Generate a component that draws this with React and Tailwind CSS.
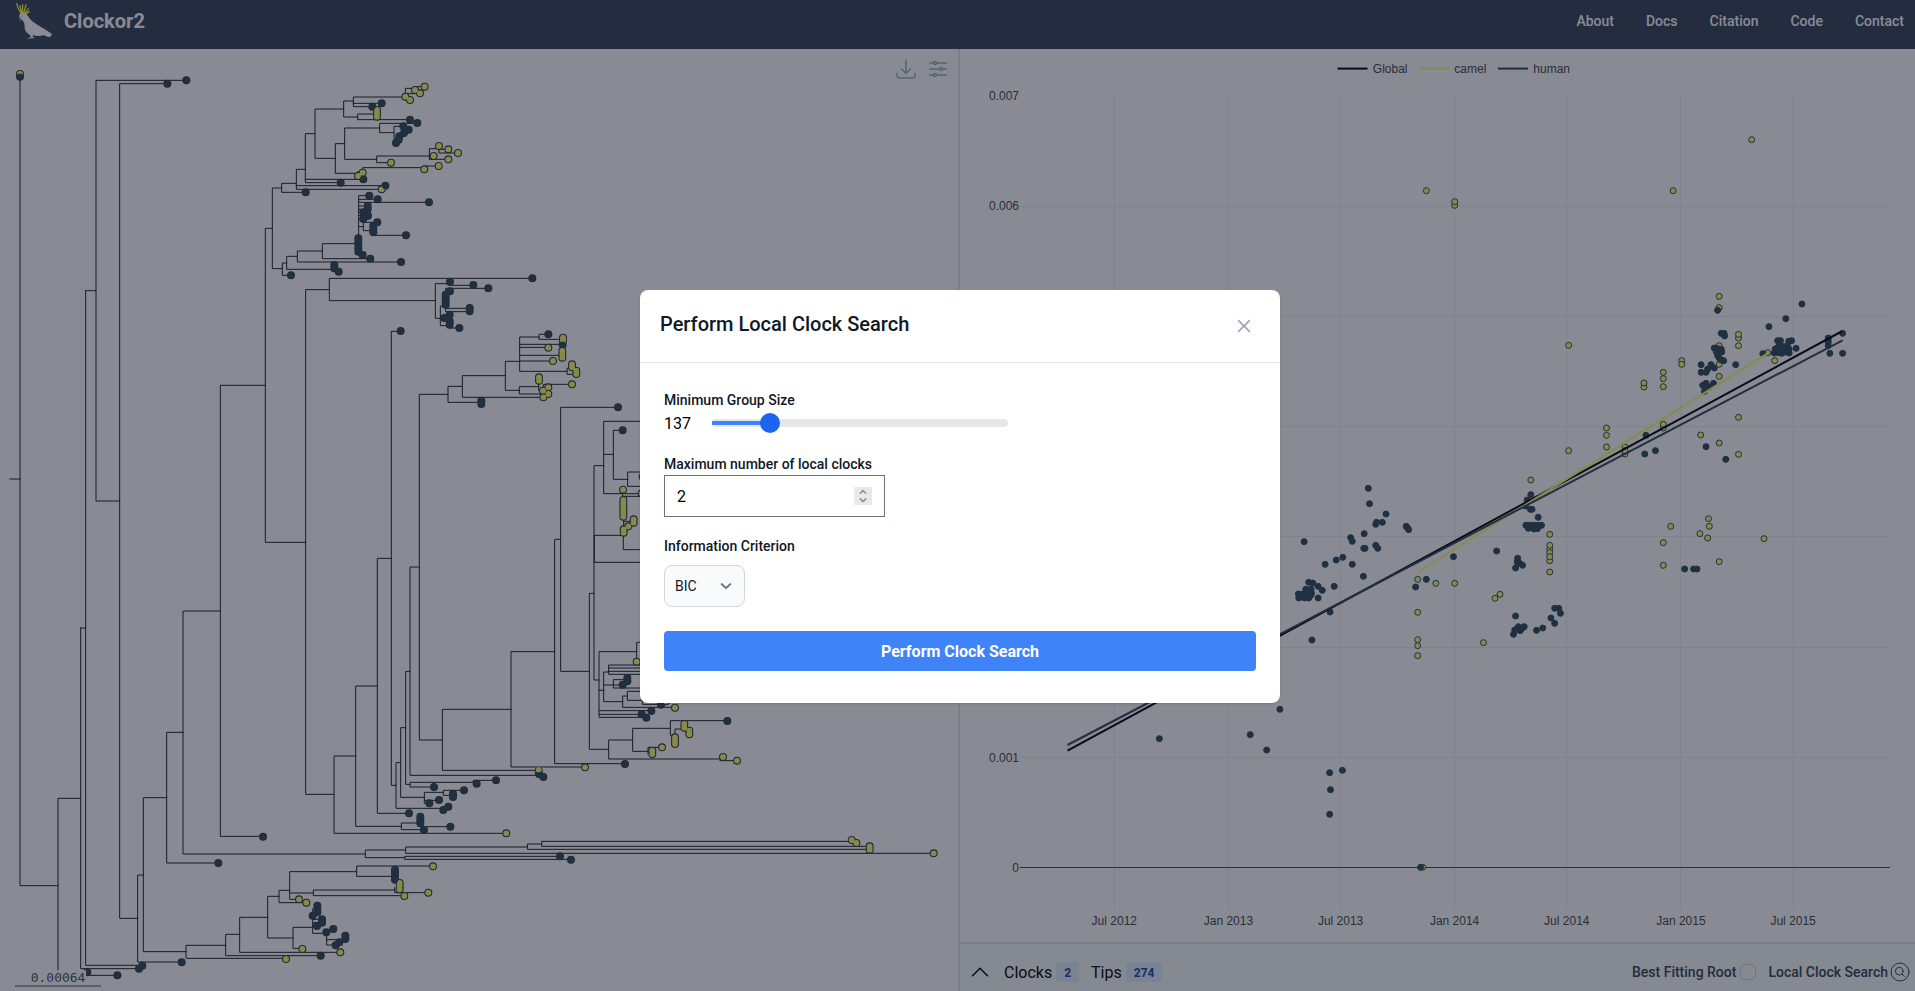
import React from "react";

/* Tree geometry is expressed in thirds of a pixel. */
const TREE_EDGES = [
  "M30 1437H60M60 235V2657H174M174 2910V2395H242M242 1884H257M242 1884V2906H417M257 872V2896H427M257 872H288",
  "M559 241H288V1503H359M502 251H359V2755H413M430 2625H413V2886H545M500 2393H430V2855H558M549 2197H500V2589H655",
  "M661 1833H549V2562H1096M796 1156H661V2509H789M817 685H796V1627H917M845 564H817V806H847M889 550H845V577H917",
  "M916 508H889V568H1145M889 557H1156M945 401H916V548H1022M916 538H1090M1031 327H945V475H1006M1060 303H1031V351H1073",
  "M1216 291H1060V320H1117M1060 310H1145M1245 265H1216V291M1216 281H1260M1245 270V260H1274M1125 342H1073V359H1230",
  "M1034 431H1006V520H1073V515H1088V503H1273M1273 503V498H1316M1139 384H1034V478H1130M1252 370H1139V398H1182",
  "M1210 379H1182V420M1288 468H1130V488H1173M1317 446H1288V478H1345M1317 448H1345M1317 448V459H1374",
  "M860 789H847V826H873M892 769H860V808H1003M967 753H892V786H1203M1075 731H967V776H1111M1108 587H1076V715",
  "M1076 598H1133M1076 607H1287M1076 618H1103M1076 628H1103M1076 637H1090M1076 647H1104M1076 657H1090M1132 667H1090V692H1120M1076 680H1090M1120 706H1218",
  "M988 869H917V2383H1002M1597 835H988V902H1306M1350 851H1306V955H1321M1345 856H1420M1337 918H1321V977H1345",
  "M1464 865H1337V935H1409M1337 925H1409M1349 984H1378M1202 994H1174V2356H1188M1174 1675H1132V2440H1227",
  "M1132 2058H1067V2479H1204M1067 2268H1002V2500H1519M1255 2469H1204V2489H1272M1265 2480H1351",
  "M1202 2288H1188V2425H1330M1217 2183H1202V2392H1273M1330 2377H1273V2401H1317M1288 2410H1273V2400M1392 2371H1330V2386H1360",
  "M1230 2014H1217V2353H1230M1420 2347H1230V2361H1302M1420 2347V2341H1488M1258 1701H1230V2326H1620",
  "M1344 1183H1258V2220H1327M1533 2128H1327V2311H1617M1664 1955H1533V2301H1755M1682 1618H1664V2291H1875",
  "M1854 1222H1682V2014H1768M1782 1780H1768V2248H1826M1811 1397H1782V2040H1797M1783 1606H1870M1783 1606V1687H1930",
  "M1930 1264H1811V1481H1921M1811 1363H1840M1868 1291H1840V1438H1883M1930 1416H1883V1459H1930",
  "M1868 1469V1489H1930M1871 1550V1580M1871 1564H1900M1870 1606V1649H1930",
  "M1387 1159H1344V1207H1444M1516 1127H1387V1192H1630M1559 1084H1516V1171H1558M1617 1011H1559V1114H1701",
  "M1559 1033H1688M1559 1042H1645M1559 1066H1680M1559 1083H1659M1645 1003H1617V1018H1688M1716 1105H1701V1123H1729",
  "M1616 1160H1558V1182H1640M1616 1145V1172H1629M1630 1162V1153H1716",
  "M1910 1955H1797V2152H1939M1797 2071H1811M1930 1927H1910V1985M1826 2016H1811V2105H1868M1930 1995H1826V2023H1930",
  "M1826 2004H1930M1826 2014H1930M1811 2055H1868M1870 2039H1840V2064H1930M1882 2088H1868V2122H2025M1930 2074H1882V2101H1927V2113H1985",
  "M1797 2132H1954M1797 2143H1925M1898 2220H1826V2277H2169M2160 2282H2211M2011 2185H1898V2254H1944",
  "M2182 2162H2011V2206H2025M2025 2212V2187H2053M1944 2262V2242H1986",
  "M1217 2550H1096V2573H1214M1582 2541H1217V2560H2801M1625 2532H1582V2548H2609M2555 2524H1625V2539H2609",
  "M1680 2569H1214V2578H1713M677 2836H558V2875H858M719 2803H677V2867H962M803 2752H719V2857H1021",
  "M837 2689H803V2814H879M869 2671H837V2708H919M1070 2615H869V2698H897M869 2679H940M1299 2598H1070V2629H1180",
  "M1184 2670H940V2687H1213M1184 2663V2678H1285M936 2782H879V2845H907M938 2727V2800H980M938 2758H966M938 2768H966",
  "M980 2800V2835H1007M980 2819H1020M258 2926H352",
].join("");

const HUMAN_TIPS = [
  [60,230],[502,251],[559,241],[1145,310],[1117,320],[1230,359],[1252,369],[1210,379],[1226,389],[1212,399],[1198,409],[1196,419],[1188,429],
  [1090,538],[1022,548],[1156,557],[917,577],[1108,587],[1133,598],[1287,607],[1103,618],[1103,628],[1090,637],[1104,647],[1090,657],[1132,667],
  [1120,677],[1120,687],[1120,697],[1218,706],[1075,715],[1075,725],[1075,735],[1075,745],[1075,755],[1088,765],[1111,776],[1203,786],
  [1003,795],[1003,805],[1016,815],[873,826],[1597,835],[1350,845],[1420,855],[1465,865],[1350,874],[1337,884],[1337,894],[1337,904],[1337,914],
  [1409,924],[1409,934],[1349,944],[1333,954],[1349,964],[1349,974],[1378,984],[1202,993],[1645,1003],[1688,1034],[1444,1202],[1444,1212],
  [1854,1222],[1868,1291],[1928,1430],[1882,2034],[1882,2044],[1868,2054],[1983,2114],[1954,2133],[1925,2143],[1939,2153],[2182,2163],
  [1875,2292],[1617,2322],[1630,2331],[1488,2341],[1430,2351],[1302,2361],[1392,2371],[1359,2381],[1359,2391],[1317,2400],[1288,2410],
  [1345,2420],[1330,2430],[1227,2440],[1261,2450],[1261,2460],[1261,2470],[1351,2480],[1272,2490],[789,2510],[1680,2569],[1713,2579],[655,2589],
  [1185,2609],[1185,2619],[1185,2629],[1185,2639],[952,2717],[952,2727],[952,2737],[938,2747],[966,2758],[966,2768],[951,2778],[1000,2787],
  [979,2797],[1036,2807],[1036,2817],[1018,2827],[1007,2836],[962,2867],[545,2887],[427,2897],[417,2906],[262,2917],[352,2926],
];

const CAMEL_TIPS = [
  [60,222],[1274,260],[1245,270],[1260,280],[1216,290],[1230,300],[1131,330],[1131,340],[1131,350],[1317,438],[1345,448],[1374,459],[1301,468],
  [1345,478],[1173,488],[1316,498],[1273,508],[1088,518],[1074,528],[1145,568],[1689,1013],[1689,1022],[1645,1043],[1687,1053],[1687,1063],
  [1687,1073],[1659,1083],[1716,1093],[1716,1102],[1729,1112],[1729,1122],[1617,1132],[1617,1142],[1716,1153],[1645,1162],[1629,1172],
  [1645,1182],[1630,1192],[1869,1469],[1925,1480],[1870,1500],[1870,1510],[1870,1520],[1870,1530],[1870,1540],[1870,1550],[1901,1558],
  [1901,1568],[1885,1579],[1871,1588],[1871,1598],[1910,1985],[1998,2104],[2025,2123],[2053,2172],[2053,2183],[2068,2192],[2068,2203],
  [2025,2212],[2025,2222],[2025,2232],[1986,2242],[1957,2252],[1957,2262],[2169,2271],[2211,2282],[1755,2302],[1616,2312],[1519,2500],
  [2555,2520],[2569,2529],[2609,2539],[2609,2549],[2801,2560],[1299,2599],[1199,2649],[1199,2658],[1199,2668],[1285,2678],[1213,2688],
  [897,2698],[919,2708],[907,2847],[1021,2857],[858,2877],
];

/* Sample positions in the regression plot's own units. */
const toX = (u) => 1270 + u / 2.431;
const toY = (v) => 270 + v / 3;

const CAMEL_SAMPLES = [
  [371,1792],[380,-238],[449,-194],[449,-205],[980,-238],[1171,-391],[1092,79],[1092,113],[1092,227],[1092,283],[1092,319],[1139,204],[1139,193],
  [1139,227],[1227,272],[1210,248],[1001,272],[1001,283],[956,307],[956,326],[956,350],[909,351],[909,339],[726,226],[818,474],[818,496],
  [818,531],[863,531],[863,552],[863,542],[956,474],[956,463],[1139,442],[1047,495],[1092,519],[1139,553],[726,542],[634,630],[680,793],
  [680,838],[680,848],[680,872],[680,860],[680,826],[680,906],[359,928],[403,940],[449,940],[359,1027],[359,1109],[359,1127],[359,1157],
  [519,1118],[547,985],[559,973],[974,769],[956,818],[956,886],[1066,746],[1068,769],[1045,791],[1064,804],[1201,806],[1092,875],
];

const HUMAN_SAMPLES = [
  [1293,102],[1254,146],[1213,170],[1088,121],[1097,190],[1104,190],[1105,198],[1080,234],[1088,236],[1097,238],[1085,245],[1092,247],[1098,246],
  [1088,256],[1092,264],[1097,270],[1103,272],[1198,251],[1234,212],[1241,212],[1268,212],[1261,214],[1228,237],[1235,232],[1242,228],[1250,230],
  [1258,228],[1262,238],[1232,247],[1238,248],[1244,250],[1252,246],[1262,249],[1226,249],[1279,235],[1256,238],[1248,238],[1357,204],[1357,211],
  [1357,218],[1357,227],[1361,250],[1392,250],[1392,190],[1048,284],[1048,307],[1060,307],[1064,297],[1072,284],[1080,294],[1132,284],[1060,340],
  [1052,346],[1078,340],[1068,352],[1060,355],[1056,364],[1060,530],[1108,568],[914,496],[911,552],[937,542],[634,674],[625,690],[621,708],
  [633,718],[637,718],[652,742],[622,766],[630,766],[638,766],[646,766],[654,766],[660,766],[628,775],[642,777],[650,776],[551,843],[602,865],
  [601,876],[607,880],[614,886],[597,894],[597,1038],[604,1070],[618,1070],[595,1080],[608,1082],[592,1093],[600,1077],[612,1076],[648,1081],
  [663,1074],[683,1044],[692,1060],[692,1015],[702,1015],[706,1030],[1008,897],[1030,897],[1038,897],[239,655],[242,701],[282,732],[259,757],
  [273,757],[257,763],[331,769],[334,773],[337,779],[229,791],[196,803],[200,814],[83,815],[257,826],[262,835],[228,835],[231,835],[177,862],
  [161,870],[134,883],[200,883],[227,919],[156,949],[94,937],[104,939],[117,949],[100,957],[127,961],[87,958],[69,972],[78,973],[86,970],
  [94,972],[101,970],[70,984],[84,984],[94,984],[99,976],[117,984],[102,1110],[146,1026],[446,860],[380,928],[354,951],[-269,1406],[-48,1394],
  [-8,1440],[24,1318],[145,1508],[176,1501],[147,1559],[145,1633],[366,1792],
];

const MONTHS = [
  ["Jul 2012", 1114.3], ["Jan 2013", 1228.4], ["Jul 2013", 1340.6], ["Jan 2014", 1454.6],
  ["Jul 2014", 1566.8], ["Jan 2015", 1680.9], ["Jul 2015", 1793.1],
];
const RATE_LINES = [206.4, 316.5, 426.5, 536.6, 647.2, 757.3];
const RATE_LABELS = [["0.007", 96.2], ["0.006", 206.4], ["0.001", 757.9], ["0", 868]];

function Tips({ points, fill, r }) {
  return points.map(([x, y], i) => <circle key={i} cx={x} cy={y} r={r} fill={fill} />);
}

function Tree() {
  return (
    <svg width="958" height="942" viewBox="0 147 2874 2826" className="block">
      <path d={TREE_EDGES} fill="none" stroke="#1f2026" strokeWidth="3" strokeLinecap="square" />
      <Tips points={HUMAN_TIPS} r="12" fill="#35383f" />
      <Tips points={CAMEL_TIPS} r="12" fill="#35383f" />
      <Tips points={CAMEL_TIPS} r="8.8" fill="#fdff6b" />
      <Tips points={HUMAN_TIPS} r="9.8" fill="#2b485a" />
      <circle cx="1616" cy="2309" r="8" fill="#fdff6b" />
      <rect x="85" y="2911" width="173" height="40" fill="#ffffff" />
      <text x="92" y="2947" fontSize="39" fill="#4d4f55" fontFamily="'DejaVu Sans Mono', monospace">0.00064</text>
      <path d="M45 2958H303" stroke="#85868a" strokeWidth="5" />
    </svg>
  );
}

function Legend({ x, color, label }) {
  return (
    <g>
      <path d={`M${x} 68.6h30`} stroke={color} strokeWidth="2" />
      <text x={x + 35.3} y="73">{label}</text>
    </g>
  );
}

function Plot() {
  return (
    <svg width="955" height="893" viewBox="960 49 955 893" className="block" fontFamily="'Liberation Sans', Arial, sans-serif" fontSize="12" fill="#444">
      <g stroke="#eee" strokeWidth="1" shapeRendering="crispEdges">
        {MONTHS.map(([m, x]) => <path key={m} d={`M${x} 95V911`} />)}
        {RATE_LINES.map((y) => <path key={y} d={`M1021 ${y}H1889`} />)}
      </g>
      <path d="M1020 867.5H1890" stroke="#444" />
      {MONTHS.map(([m, x]) => <text key={m} x={x} y="925" textAnchor="middle">{m}</text>)}
      {RATE_LABELS.map(([r, y]) => <text key={r} x="1019" y={y + 3.6} textAnchor="end">{r}</text>)}
      <Legend x={1337.5} color="#000" label="Global" />
      <Legend x={1419} color="#fdff6b" label="camel" />
      <Legend x={1498} color="#2b485a" label="human" />
      <g stroke="#2b485a" strokeWidth="1">
        {CAMEL_SAMPLES.map(([u, v], i) => <circle key={i} cx={toX(u)} cy={toY(v)} r="3" fill="#fdff6b" />)}
        {HUMAN_SAMPLES.map(([u, v], i) => <circle key={i} cx={toX(u)} cy={toY(v)} r="3" fill="#2b485a" />)}
      </g>
      <g fill="none" strokeWidth="2">
        <path d="M1067.5 750.7L1841.5 331.5" stroke="#000" />
        <path d="M1418 572L1767.7 353.3" stroke="#fdff6b" />
        <path d="M1067.5 745L1842.6 340.3" stroke="#2b485a" />
      </g>
    </svg>
  );
}

function Cockatoo() {
  return (
    <svg width="38" height="38" viewBox="45 6 114 114" className="block">
      <path d="M65 44Q54 28 50 11M65 42L60 17M67 42L68 15M70 42L78 15M72 43L85 26M74 44L88 34" stroke="#fdff3b" strokeWidth="4" fill="none" strokeLinecap="round" />
      <path d="M58 46Q59 38 68 38Q80 39 86 51Q93 63 112 74L137 89L156 102L153 109L146 112L132 106Q112 110 98 105L99 111L105 114L78 116L92 112L90 105Q72 96 74 78Q74 68 67 60L62 62Q56 54 58 46Z" fill="#fff" />
      <path d="M57 50Q56 57 62 63L66 57Z" fill="#8b8f96" />
      <circle cx="66" cy="48" r="1.8" fill="#555" />
    </svg>
  );
}

function Navbar() {
  return (
    <header className="flex h-[49px] shrink-0 items-start justify-between bg-[#364057] pl-[15px] pr-[11px] text-white">
      <div className="flex items-start gap-[11px] pt-[2px]">
        <Cockatoo />
        <span className="pt-[5px] text-xl font-bold leading-7">Clockor2</span>
      </div>
      <nav className="flex gap-8 pt-[11px] text-sm font-medium leading-5">
        <a>About</a><a>Docs</a><a>Citation</a><a>Code</a><a>Contact</a>
      </nav>
    </header>
  );
}

function TreeTools() {
  return (
    <div className="absolute left-[894px] top-[8px] flex gap-2 text-[#a3abbb]">
      <svg width="24" height="24" viewBox="0 0 24 24" fill="none" stroke="currentColor" strokeWidth="1.5" strokeLinecap="round" strokeLinejoin="round">
        <path d="M3 16.5v2.25A2.25 2.25 0 005.25 21h13.5A2.25 2.25 0 0021 18.75V16.5M16.5 12L12 16.5m0 0L7.5 12m4.5 4.5V3" />
      </svg>
      <svg width="24" height="24" viewBox="0 0 24 24" fill="none" stroke="currentColor" strokeWidth="1.5" strokeLinecap="round" strokeLinejoin="round">
        <path d="M10.5 6h9.75M10.5 6a1.5 1.5 0 11-3 0m3 0a1.5 1.5 0 10-3 0M3.75 6H7.5m3 12h9.75m-9.75 0a1.5 1.5 0 01-3 0m3 0a1.5 1.5 0 00-3 0m-3.75 0H7.5m9-6h3.75m-3.75 0a1.5 1.5 0 01-3 0m3 0a1.5 1.5 0 00-3 0m-9.75 0h9.75" />
      </svg>
    </div>
  );
}

function Badge({ children }) {
  return (
    <span className="flex h-5 items-center rounded bg-[#e1effe] px-2 pt-px text-xs font-bold text-[#1e429f]">{children}</span>
  );
}

function InfoBar() {
  return (
    <footer className="flex h-[49px] items-start justify-between border-t-2 border-gray-200 bg-gray-50 pl-2 pr-[5px] pt-[18px]">
      <div className="flex h-5 items-center text-base text-black">
        <svg width="24" height="24" viewBox="0 0 24 24" fill="none" stroke="currentColor" strokeWidth="1.5" strokeLinecap="round" strokeLinejoin="round">
          <path d="M4.5 15.75l7.5-7.5 7.5 7.5" />
        </svg>
        <span className="ml-3 mr-1 pt-[2px]">Clocks</span>
        <Badge>2</Badge>
        <span className="ml-3 mr-1 pt-[2px]">Tips</span>
        <Badge>274</Badge>
      </div>
      <div className="flex h-5 items-center text-sm font-medium text-gray-700">
        <span>Best Fitting Root</span>
        <span className="ml-1 size-4 rounded border border-gray-300 bg-gray-50" />
        <span className="ml-3">Local Clock Search</span>
        <svg width="20" height="20" viewBox="0 0 20 20" fill="none" stroke="currentColor" strokeWidth="1" strokeLinecap="round" className="ml-[2px]">
          <circle cx="10" cy="10" r="9" />
          <circle cx="9.2" cy="9.2" r="3.8" />
          <path d="M12 12l2.4 2.4" />
        </svg>
      </div>
    </footer>
  );
}

function ClockSearchDialog() {
  return (
    <div className="flex h-[413px] w-[640px] flex-col rounded-lg bg-white shadow">
      <div className="flex h-[73px] items-start justify-between border-b border-gray-200 px-5 pt-[19px]">
        <h3 className="text-xl font-medium leading-[30px] text-gray-900">Perform Local Clock Search</h3>
        <svg width="20" height="20" viewBox="0 0 20 20" fill="none" stroke="#9ca3af" strokeWidth="1.5" strokeLinecap="round" className="mr-[6px] mt-[7px]">
          <path d="M4.6 4.6l10.8 10.8M15.4 4.6L4.6 15.4" />
        </svg>
      </div>
      <div className="flex flex-col px-6 pt-[27px] text-gray-900">
        <label className="text-sm font-medium leading-5">Minimum Group Size</label>
        <div className="flex h-[26px] items-center">
          <span className="w-12 pt-[2px] text-base text-black">137</span>
          <div className="relative flex h-2 w-[296px] items-center rounded-lg bg-gray-200">
            <span className="h-1 w-[58px] bg-[#3f83f8]" />
            <span className="absolute left-[48px] top-[-6px] size-5 rounded-full bg-[#1c64f2]" />
          </div>
        </div>
        <label className="mt-[18px] text-sm font-medium leading-5">Maximum number of local clocks</label>
        <div className="mt-px flex h-[42px] w-[221px] items-center justify-between border border-gray-500 px-3 text-base text-black">
          <span className="pt-[2px]">2</span>
          <span className="flex h-[18px] w-[18px] items-center justify-center bg-[#e9e9ed]">
            <svg width="18" height="18" viewBox="0 0 18 18" fill="none" stroke="#8f8f9d" strokeWidth="1.6">
              <path d="M5.8 6.8L9 3.6l3.2 3.2M5.8 11.4L9 14.6l3.2-3.2" />
            </svg>
          </span>
        </div>
        <label className="mt-[19px] text-sm font-medium leading-5">Information Criterion</label>
        <div className="mt-[9px] flex h-[42px] w-[81px] items-center justify-between rounded-lg border border-gray-300 bg-gray-50 pl-[10px] pr-3 text-sm">
          <span>BIC</span>
          <svg width="12" height="8" viewBox="0 0 12 8" fill="none" stroke="#6b7280" strokeWidth="1.8" strokeLinecap="round" strokeLinejoin="round">
            <path d="M1.6 2L6 6.2 10.4 2" />
          </svg>
        </div>
        <button className="mt-6 h-10 rounded bg-[#3f83f8] pt-[2px] text-base font-bold text-white">Perform Clock Search</button>
      </div>
    </div>
  );
}

export default function App() {
  return (
    <div className="flex h-[991px] w-[1915px] flex-col overflow-hidden bg-white font-['Roboto',sans-serif]">
      <Navbar />
      <main className="flex h-[942px]">
        <section className="relative w-[960px] border-r-2 border-gray-200">
          <Tree />
          <TreeTools />
        </section>
        <section className="flex w-[955px] flex-col">
          <Plot />
          <InfoBar />
        </section>
      </main>
      <div className="absolute inset-0 flex items-start justify-center overflow-hidden bg-[#111827]/50 pl-[5px] pt-[290px]">
        <ClockSearchDialog />
      </div>
    </div>
  );
}
